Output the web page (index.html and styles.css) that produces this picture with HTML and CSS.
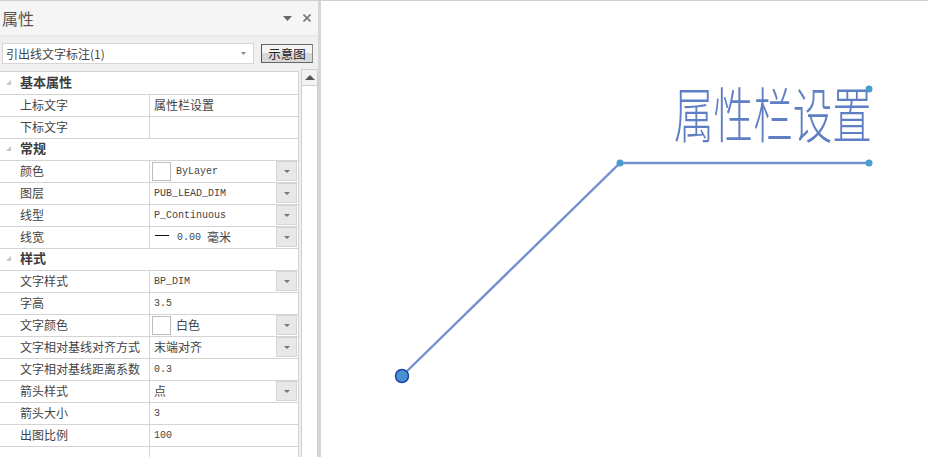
FILE: index.html
```html
<!DOCTYPE html>
<html lang="zh">
<head>
<meta charset="utf-8">
<title>属性</title>
<link rel="stylesheet" href="styles.css">
</head>
<body>
<div class="app">
  <aside class="panel">
    <header class="title-bar">
      <h1 class="title">属性</h1>
      <div class="title-tools">
        <svg class="icon-menu" width="9" height="5" viewBox="0 0 9 5"><path d="M0 0H9L4.5 5Z"/></svg>
        <svg class="icon-close" width="8" height="8" viewBox="0 0 8 8"><path d="M0.5 0.5L7.5 7.5M7.5 0.5L0.5 7.5"/></svg>
      </div>
    </header>
    <div class="selector-bar">
      <div class="combo">
        <span>引出线文字标注(1)</span>
        <svg class="arrow" width="5" height="3" viewBox="0 0 5 3"><path d="M0 0H5L2.5 3Z"/></svg>
      </div>
      <button class="preview-btn">示意图</button>
    </div>
    <div class="body">
      <div class="table">
        <div class="row section"><span class="twist"></span><span>基本属性</span></div>
        <div class="row"><div class="label">上标文字</div><div class="value">属性栏设置</div></div>
        <div class="row"><div class="label">下标文字</div><div class="value"></div></div>
        <div class="row section"><span class="twist"></span><span>常规</span></div>
        <div class="row"><div class="label">颜色</div><div class="value mono"><span class="swatch"></span><span class="after-swatch">ByLayer</span><span class="drop"><i></i></span></div></div>
        <div class="row"><div class="label">图层</div><div class="value mono">PUB_LEAD_DIM<span class="drop"><i></i></span></div></div>
        <div class="row"><div class="label">线型</div><div class="value mono">P_Continuous<span class="drop"><i></i></span></div></div>
        <div class="row"><div class="label">线宽</div><div class="value mono"><span class="weight-line"></span><span class="weight-num">0.00</span><span class="weight-unit">毫米</span><span class="drop"><i></i></span></div></div>
        <div class="row section"><span class="twist"></span><span>样式</span></div>
        <div class="row"><div class="label">文字样式</div><div class="value mono">BP_DIM<span class="drop"><i></i></span></div></div>
        <div class="row"><div class="label">字高</div><div class="value mono">3.5</div></div>
        <div class="row"><div class="label">文字颜色</div><div class="value"><span class="swatch"></span><span class="after-swatch">白色</span><span class="drop"><i></i></span></div></div>
        <div class="row"><div class="label">文字相对基线对齐方式</div><div class="value">末端对齐<span class="drop"><i></i></span></div></div>
        <div class="row"><div class="label">文字相对基线距离系数</div><div class="value mono">0.3</div></div>
        <div class="row"><div class="label">箭头样式</div><div class="value">点<span class="drop"><i></i></span></div></div>
        <div class="row"><div class="label">箭头大小</div><div class="value mono">3</div></div>
        <div class="row"><div class="label">出图比例</div><div class="value mono">100</div></div>
        <div class="row filler"><div class="label"></div><div class="value"></div></div>
      </div>
      <div class="scrollbar">
        <div class="scroll-btn"><svg width="10" height="5" viewBox="0 0 10 5"><path d="M5 0L10 5H0Z"/></svg></div>
      </div>
    </div>
  </aside>
  <main class="canvas">
    <svg class="drawing" width="607" height="456" viewBox="321 1 607 456">
      <path class="leader" d="M402 376L620 163H869"/>
      <text class="cad-text" transform="translate(674 137.5) scale(1.015 1.55)">属性栏设置</text>
      <circle class="grip" cx="620" cy="163" r="3.5"/>
      <circle class="grip" cx="869" cy="163" r="3.5"/>
      <circle class="grip" cx="869" cy="89" r="3.5"/>
      <circle class="grip-start" cx="402" cy="376" r="6.5"/>
    </svg>
  </main>
</div>
</body>
</html>
```

FILE: styles.css
```css
* { box-sizing: border-box; }
html, body {
  margin: 0;
  height: 457px;
  overflow: hidden;
  background: #fff;
  font-family: "Noto Sans CJK SC", "Liberation Sans", sans-serif;
  font-size: 12px;
  color: #444;
}
.app {
  display: flex;
  height: 457px;
  border-top: 1px solid #d0d0d0;
}
.panel {
  width: 321px;
  flex: none;
  display: flex;
  flex-direction: column;
  background: #f0f0f0;
  border-right: 3px solid #d6d6d6;
}
.title-bar {
  height: 36px;
  flex: none;
  display: flex;
  align-items: center;
  justify-content: space-between;
  padding: 0 7px 0 2px;
  background: #f5f5f5;
  border-bottom: 2px solid #e9e9e9;
}
.title {
  margin: 0;
  font-size: 16px;
  font-weight: 400;
  line-height: 20px;
  color: #5a5550;
}
.title-tools { display: flex; align-items: center; gap: 11px; }
.icon-menu path { fill: #666; }
.icon-close path { stroke: #777; stroke-width: 1.6; fill: none; }
.selector-bar {
  height: 32px;
  flex: none;
  display: flex;
  align-items: flex-start;
  padding: 6px 0 0 2px;
}
.combo {
  width: 252px;
  height: 21px;
  display: flex;
  align-items: center;
  justify-content: space-between;
  padding: 0 7px 0 3px;
  background: #fff;
  border: 1px solid #d6d6d6;
  line-height: 18px;
}
.arrow path { fill: #888; }
.preview-btn {
  width: 52px;
  height: 19px;
  margin: 1px 0 0 7px;
  padding: 0;
  font: inherit;
  font-size: 12.5px;
  line-height: 16px;
  color: #222;
  background: linear-gradient(#f4f4f4 50%, #d8d8d8 50%);
  border: 1px solid #666;
  border-left-color: #555;
  border-right-color: #888;
}
.body {
  flex: 1;
  min-height: 0;
  display: flex;
  align-items: flex-start;
  overflow: hidden;
}
.table {
  width: 299px;
  flex: none;
  background: #fff;
  border-top: 1px solid #d4d4d4;
  margin-top: 2px;
  padding-top: 1px;
  border-right: 1px solid #d4d4d4;
}
.row {
  height: 22px;
  display: flex;
  border-bottom: 1px solid #d4d4d4;
}
.label {
  width: 150px;
  flex: none;
  padding-left: 20px;
  line-height: 19px;
  border-right: 1px solid #d4d4d4;
  white-space: nowrap;
  overflow: hidden;
}
.value {
  flex: 1;
  display: flex;
  align-items: center;
  padding: 0 0 2px 4px;
  position: relative;
  white-space: nowrap;
}
.mono {
  padding-bottom: 0;
  font-family: "Liberation Mono", "Noto Sans CJK SC", monospace;
  font-size: 10px;
}
.section {
  align-items: center;
  padding-bottom: 4px;
  font-weight: 700;
  font-size: 13px;
  color: #3c3c3c;
}
.twist {
  width: 0;
  height: 0;
  margin: 2px 9px 0 6px;
  border-style: solid;
  border-width: 0 0 5px 5px;
  border-color: transparent transparent #c4c4c4 transparent;
}
.swatch {
  width: 19px;
  height: 19px;
  flex: none;
  margin: 2px 0 0 -2px;
  border: 1px solid #bdbdbd;
  background: #fff;
}
.mono .swatch { margin-top: 0; }
.after-swatch { margin-left: 5px; }
.weight-line {
  width: 14px;
  height: 1px;
  flex: none;
  margin: 0 0 5px 1px;
  background: #111;
}
.weight-num { margin-left: 8px; }
.weight-unit {
  margin: 0 0 2px 6px;
  font-family: "Noto Sans CJK SC", sans-serif;
  font-size: 12px;
}
.drop {
  position: absolute;
  right: 1px;
  top: 0;
  width: 21px;
  height: 20px;
  display: flex;
  align-items: center;
  justify-content: center;
  background: #e8e8e8;
  border: 1px solid #d4d4d4;
}
.drop i {
  width: 0;
  height: 0;
  border-style: solid;
  border-width: 3px 3px 0;
  border-color: #777 transparent transparent;
}
.filler { height: 10px; border-bottom: 0; }
.scrollbar {
  width: 17px;
  height: 388px;
  flex: none;
  margin-left: 2px;
  background: #fff;
  border: 1px solid #d0d0d0;
  border-width: 1px 1px 0;
}
.scroll-btn {
  height: 16px;
  display: flex;
  align-items: center;
  justify-content: center;
  background: #f2f2f2;
  border-bottom: 1px solid #d0d0d0;
}
.scroll-btn path { fill: #555; }
.canvas {
  flex: 1;
  min-width: 0;
  background: #fff;
}
.drawing { display: block; }
.leader { fill: none; stroke: #7590cf; stroke-width: 2.4; }
.cad-text {
  font-family: "Noto Sans CJK SC", sans-serif;
  font-size: 39px;
  font-weight: 300;
  fill: #5f7fc4;
}
.grip { fill: #4a9bce; }
.grip-start { fill: #4c8fcf; stroke: #1b46a8; stroke-width: 1.5; }
```
